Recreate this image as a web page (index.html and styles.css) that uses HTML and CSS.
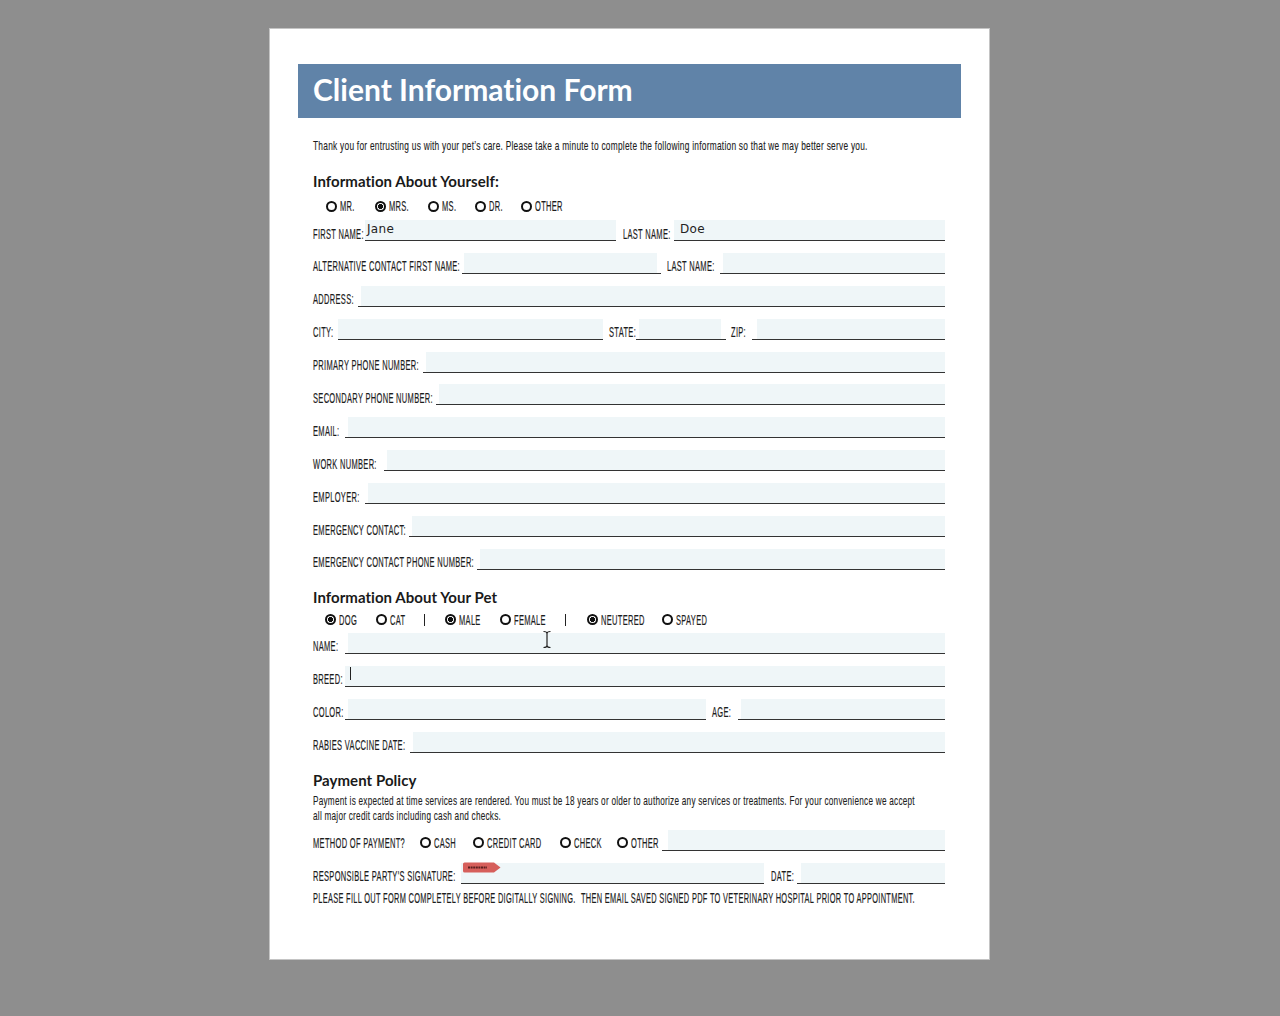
FILE: index.html
```html
<!DOCTYPE html>
<html lang="en">
<head>
<meta charset="utf-8">
<title>Client Information Form</title>
<link rel="stylesheet" href="styles.css">
</head>
<body>
<main class="sheet">
  <header class="banner"><h1>Client Information Form</h1></header>
  <div class="content">
    <p class="intro"><span class="sq">Thank you for entrusting us with your pet’s care. Please take a minute to complete the following information so that we may better serve you.</span></p>

    <h2 class="h-first">Information About Yourself:</h2>
    <div class="radios r-self">
      <div class="radio w49"><i class="dot"></i><span class="sq">MR.</span></div>
      <div class="radio w53 on"><i class="dot"></i><span class="sq">MRS.</span></div>
      <div class="radio w47"><i class="dot"></i><span class="sq">MS.</span></div>
      <div class="radio w46"><i class="dot"></i><span class="sq">DR.</span></div>
      <div class="radio w50"><i class="dot"></i><span class="sq">OTHER</span></div>
    </div>
    <div class="row first">
      <div class="lbl w52"><span class="sq">FIRST NAME:</span></div>
      <div class="field w251"><span class="tint"><span class="val">Jane</span></span></div>
      <div class="lbl w51 ml7"><span class="sq">LAST NAME:</span></div>
      <div class="field grow"><span class="tint"><span class="val val-doe">Doe</span></span></div>
    </div>
    <div class="row">
      <div class="lbl w149"><span class="sq">ALTERNATIVE CONTACT FIRST NAME:</span></div>
      <div class="field w199"><span class="tint in2"></span></div>
      <div class="lbl w53 ml6"><span class="sq">LAST NAME:</span></div>
      <div class="field grow"></div>
    </div>
    <div class="row"><div class="lbl w45"><span class="sq">ADDRESS:</span></div><div class="field grow"></div></div>
    <div class="row">
      <div class="lbl w25"><span class="sq">CITY:</span></div>
      <div class="field w265"><span class="tint"></span></div>
      <div class="lbl w27 ml6"><span class="sq">STATE:</span></div>
      <div class="field w90"><span class="tint in3"></span></div>
      <div class="lbl w21 ml5"><span class="sq">ZIP:</span></div>
      <div class="field grow"><span class="tint in5"></span></div>
    </div>
    <div class="row"><div class="lbl w110"><span class="sq">PRIMARY PHONE NUMBER:</span></div><div class="field grow"></div></div>
    <div class="row"><div class="lbl w123"><span class="sq">SECONDARY PHONE NUMBER:</span></div><div class="field grow"></div></div>
    <div class="row"><div class="lbl w32"><span class="sq">EMAIL:</span></div><div class="field grow"></div></div>
    <div class="row"><div class="lbl w71"><span class="sq">WORK NUMBER:</span></div><div class="field grow"></div></div>
    <div class="row"><div class="lbl w52"><span class="sq">EMPLOYER:</span></div><div class="field grow"></div></div>
    <div class="row"><div class="lbl w96"><span class="sq">EMERGENCY CONTACT:</span></div><div class="field grow"></div></div>
    <div class="row"><div class="lbl w164"><span class="sq">EMERGENCY CONTACT PHONE NUMBER:</span></div><div class="field grow"><span class="tint in3"></span></div></div>

    <h2 class="h-pet">Information About Your Pet</h2>
    <div class="radios r-pet">
      <div class="radio w51 on"><i class="dot"></i><span class="sq">DOG</span></div>
      <div class="radio w42"><i class="dot"></i><span class="sq">CAT</span></div>
      <div class="sep w27"></div>
      <div class="radio w55 on"><i class="dot"></i><span class="sq">MALE</span></div>
      <div class="radio w59"><i class="dot"></i><span class="sq">FEMALE</span></div>
      <div class="sep w28"></div>
      <div class="radio w75 on"><i class="dot"></i><span class="sq">NEUTERED</span></div>
      <div class="radio w50"><i class="dot"></i><span class="sq">SPAYED</span></div>
    </div>
    <div class="row first-pet"><div class="lbl w32"><span class="sq">NAME:</span></div><div class="field grow"></div></div>
    <div class="row"><div class="lbl w32"><span class="sq">BREED:</span></div><div class="field grow"><span class="tint"><i class="caret"></i></span></div></div>
    <div class="row">
      <div class="lbl w32"><span class="sq">COLOR:</span></div>
      <div class="field w361"></div>
      <div class="lbl w26 ml6"><span class="sq">AGE:</span></div>
      <div class="field grow"></div>
    </div>
    <div class="row"><div class="lbl w97"><span class="sq">RABIES VACCINE DATE:</span></div><div class="field grow"></div></div>

    <h2 class="h-pay">Payment Policy</h2>
    <p class="policy"><span class="sq">Payment is expected at time services are rendered. You must be 18 years or older to authorize any services or treatments. For your convenience we accept<br>all major credit cards including cash and checks.</span></p>
    <div class="row first-method">
      <div class="lbl w107"><span class="sq">METHOD OF PAYMENT?</span></div>
      <div class="radio w53 r-inline"><i class="dot"></i><span class="sq">CASH</span></div>
      <div class="radio w87 r-inline"><i class="dot"></i><span class="sq">CREDIT CARD</span></div>
      <div class="radio w57 r-inline"><i class="dot"></i><span class="sq">CHECK</span></div>
      <div class="radio w45 r-inline"><i class="dot"></i><span class="sq">OTHER</span></div>
      <div class="field grow"><span class="tint in6"></span></div>
    </div>
    <div class="row row-sig">
      <div class="lbl lbl-sig w148"><span class="sq">RESPONSIBLE PARTY'S SIGNATURE:</span></div>
      <div class="field w303">
        <span class="tint"></span>
        <svg class="sign" viewBox="0 0 38 11" aria-hidden="true"><path d="M1.500 0.500H31L37.500 5.500L31 10.500H1.500Q0 10.500 0 9V2Q0 0.500 1.500 0.500Z" fill="#d65f5b"/><path d="M5 5.500H24" stroke="#5a1f1f" stroke-width="2" stroke-dasharray="2 .6"/></svg>
      </div>
      <div class="lbl lbl-sig w26 ml7"><span class="sq">DATE:</span></div>
      <div class="field grow"><span class="tint in4"></span></div>
    </div>
    <div class="note">
      <p class="note-a"><span class="sq">PLEASE FILL OUT FORM COMPLETELY BEFORE DIGITALLY SIGNING.</span></p>
      <p class="note-b"><span class="sq">THEN EMAIL SAVED SIGNED PDF TO VETERINARY HOSPITAL PRIOR TO APPOINTMENT.</span></p>
    </div>
  </div>
  <svg class="ibeam" viewBox="0 0 10 18" aria-hidden="true"><path d="M1.500 1C3.500 1 5 1.500 5 3V15C5 16.500 3.500 17 1.500 17M8.500 1C6.500 1 5 1.500 5 3V15C5 16.500 6.500 17 8.500 17" fill="none" stroke="#222" stroke-width="1.2"/></svg>
</main>
</body>
</html>
```
FILE: styles.css
```css
* { box-sizing: border-box; }
html, body { margin: 0; padding: 0; height: 1016px; overflow: hidden; background: #8e8e8e; }
body { padding: 28px 0 0 269px; font-family: "Liberation Sans Narrow", "Liberation Sans", sans-serif; color: #1d1d1d; }
.sheet { position: relative; width: 721px; height: 932px; background: #fff; border: 1px solid #c4c4c4; padding: 35px 28px 0 28px; }
.banner { height: 53.500px; width: 663px; background: #6083a8; display: flex; align-items: center; padding: 0 0 4px 15px; }
h1 { margin: 0; font: 700 30px/1 Lato, sans-serif; color: #fff; font-variant-ligatures: none; }
.content { width: 647px; padding-left: 15px; }
.sq { display: inline-block; white-space: nowrap; transform: scaleX(.535); transform-origin: 0 50%; font-size: 14px; line-height: 14px; letter-spacing: .6px; -webkit-text-stroke: .2px currentColor; }
.intro { margin: 18.500px 0 0; height: 15px; }
.intro .sq { font-size: 13px; letter-spacing: .4px; transform: scaleX(.642); -webkit-text-stroke: .12px currentColor; }
h2 { margin: 0; font: 700 15px/18px Lato, sans-serif; color: #1a1a1a; letter-spacing: .05px; font-variant-ligatures: none; }
.h-first { margin-top: 21px; }
.h-pet { margin-top: 18px; }
.h-pay { margin-top: 18px; }
.radios { display: flex; align-items: center; height: 14px; }
.r-self { margin-top: 9px; padding-left: 12.500px; }
.r-pet { margin-top: 7px; padding-left: 12px; }
.radio { display: flex; align-items: center; gap: 3px; height: 14px; flex: none; }
.dot { flex: none; display: block; width: 11px; height: 11px; border: 2px solid #111; border-radius: 50%; background: #fff; }
.on .dot { background: radial-gradient(circle, #111 0 2.300px, #fff 2.800px); }
.sep { flex: none; height: 14px; position: relative; }
.sep::before { content: ""; position: absolute; left: 6px; top: 1px; height: 12px; border-left: 1px solid #222; }
.row { display: flex; align-items: flex-end; height: 32.900px; }
.row.first { height: 28px; }
.row.first-pet { height: 27px; }
.row.first-method { height: 29px; }
.row.row-sig { height: 33.500px; }
.lbl { flex: none; height: 14px; margin-bottom: 2.500px; }
.lbl-sig { margin-bottom: 3.500px; }
.field { flex: none; position: relative; height: 21px; border-bottom: 1px solid #333; display: flex; }
.grow { flex: 1; }
.tint { display: block; flex: 1; background: #eff6f8; height: 20px; position: relative; }
.field:empty { background: linear-gradient(#eff6f8, #eff6f8) no-repeat 3px 0 / 100% 20px; }
.in2 { margin: 0 4px 0 2px; }
.in3 { margin-left: 3px; margin-right: 5px; }
.grow .in3 { margin-right: 0; }
.in4 { margin-left: 4px; }
.in5 { margin-left: 5px; }
.in6 { margin-left: 6px; }
.val { position: absolute; left: 2px; top: 1px; font: 12px/16px "DejaVu Sans", sans-serif; color: #222; letter-spacing: .3px; }
.val-doe { left: 6px; }
.caret { position: absolute; left: 5px; top: 1px; width: 1px; height: 13px; background: #222; }
.policy { margin: 4px 0 0; height: 29px; }
.policy .sq { font-size: 13px; line-height: 15px; letter-spacing: .4px; transform: scaleX(.63); transform-origin: 0 0; -webkit-text-stroke: .12px currentColor; }
.note { margin: 4.500px 0 0; height: 14px; display: flex; }
.note p { margin: 0; }
.note .sq { transform: scaleX(.529); }
.note-a { flex: none; width: 268px; }
.r-inline { height: 14px; margin-bottom: 1px; }
.sign { position: absolute; left: 2px; top: -1px; width: 38px; height: 11px; }
.ibeam { position: absolute; left: 272px; top: 601px; width: 10px; height: 19px; }
.ml5 { margin-left: 5px; } .ml6 { margin-left: 6px; } .ml7 { margin-left: 7px; }
.w21 { width: 21px; } .w25 { width: 25px; } .w26 { width: 26px; } .w27 { width: 27px; } .w28 { width: 28px; }
.w32 { width: 32px; } .w42 { width: 42px; } .w45 { width: 45px; } .w46 { width: 46px; } .w47 { width: 47px; }
.w49 { width: 49px; } .w50 { width: 50px; } .w51 { width: 51px; } .w52 { width: 52px; } .w53 { width: 53px; }
.w55 { width: 55px; } .w57 { width: 57px; } .w59 { width: 59px; } .w71 { width: 71px; } .w75 { width: 75px; }
.w87 { width: 87px; } .w90 { width: 90px; } .w96 { width: 96px; } .w97 { width: 97px; } .w107 { width: 107px; }
.w110 { width: 110px; } .w123 { width: 123px; } .w148 { width: 148px; } .w149 { width: 149px; } .w164 { width: 164px; }
.w199 { width: 199px; } .w251 { width: 251px; } .w265 { width: 265px; } .w303 { width: 303px; } .w361 { width: 361px; }
```
